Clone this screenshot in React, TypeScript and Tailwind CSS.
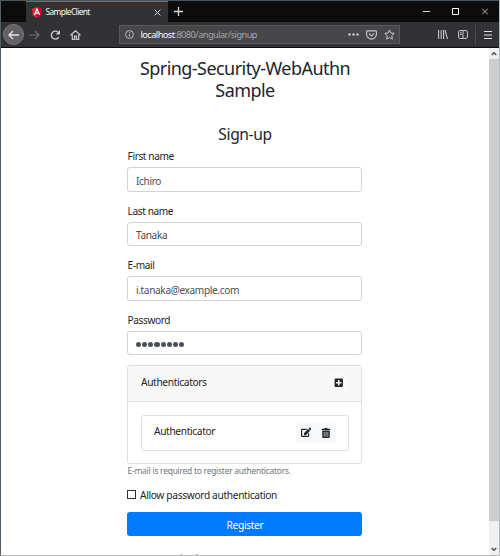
import React from "react";
import { FaEdit, FaTrashAlt, FaPlusSquare } from "react-icons/fa";

const stroke = { fill: "none", stroke: "currentColor" } as const;

function AngularLogo() {
  return (
    <svg width="10" height="11" viewBox="0 0 10 11">
      <path d="M5 0 10 1.8 9.2 8.4 5 11 .8 8.4 0 1.8Z" fill="#dd2c38" />
      <path d="M5 0 10 1.8 9.2 8.4 5 11Z" fill="#c3002f" />
      <path d="M2.3 7.9 5 1.9 7.7 7.9M3.5 6.1H6.5" fill="none" stroke="#fff" strokeWidth="1.1" />
    </svg>
  );
}

function TitleBar() {
  return (
    <div className="flex h-[21px] shrink-0 bg-[#0c0c0c] text-[#d7d7db]">
      <div className="ml-[25px] flex w-[142px] items-center border-t border-[#0a84ff] bg-[#323234] pl-1.5">
        <AngularLogo />
        <span className="ml-[3.5px] w-[108.5px] pt-px text-[8.3px] tracking-[-0.58px] text-[#f9f9fa]">SampleClient</span>
        <svg width="7" height="7" viewBox="0 0 7 7" {...stroke}><path d="m.6.6 5.8 5.8m0-5.8L.6 6.4" /></svg>
      </div>
      <svg className="ml-[6px] mt-[6px]" width="9" height="9" viewBox="0 0 9 9" {...stroke} strokeWidth="1.3"><path d="M4.5 0v9M0 4.5h9" /></svg>
      <div className="ml-auto flex items-center pr-[11px]">
        <svg width="7" height="7" viewBox="0 0 7 7" {...stroke}><path d="M0 3.5h7" /></svg>
        <svg className="ml-[22px]" width="7" height="7" viewBox="0 0 7 7" {...stroke} stroke="#fff"><path d="M.5.5h6v6h-6z" /></svg>
        <svg className="ml-[23px]" width="6" height="7" viewBox="0 0 6 7" {...stroke} strokeWidth=".8"><path d="m0 .5 6 6m0-6-6 6" /></svg>
      </div>
    </div>
  );
}

function Toolbar() {
  return (
    <div className="flex h-[26px] shrink-0 items-center border-b border-[#0e0c0e] bg-[#323234] text-[#c8c8cb]">
      <div className="ml-[2px] flex size-[21px] shrink-0 items-center justify-center rounded-full border border-[#7c7c7e] bg-[#626264] text-[#e4e4e6]">
        <svg width="11" height="10" viewBox="0 0 11 10" {...stroke} strokeWidth="1.3"><path d="M11 5H1M5 1 1 5l4 4" /></svg>
      </div>
      <svg className="ml-[5px] shrink-0 text-[#6e6e70]" width="11" height="10" viewBox="0 0 11 10" {...stroke} strokeWidth="1.2"><path d="M0 5h10M6 1l4 4-4 4" /></svg>
      <svg className="ml-[10px] shrink-0" width="11" height="10" viewBox="0 0 11 10" {...stroke} strokeWidth="1.4"><path d="M8.8 7.2A4 4 0 1 1 8.5 2.6" /><path d="M10 0v4.4H5.6Z" fill="currentColor" stroke="none" /></svg>
      <svg className="ml-[9px] shrink-0" width="11" height="10" viewBox="0 0 11 10" {...stroke} strokeWidth="1.2"><path d="m.5 5.3 5-4.6 5 4.6M2.3 4.5v4.9h2.3V6h1.8v3.4h2.3V4.5" /></svg>
      <div className="ml-[38px] flex h-[19px] w-[281px] shrink-0 items-center border border-[#59595b] bg-[#474749]">
        <svg className="ml-[5px]" width="9" height="9" viewBox="0 0 9 9" {...stroke} strokeWidth=".9"><circle cx="4.5" cy="4.5" r="3.9" /><path d="M4.5 4v2.7M4.5 2.2v1" /></svg>
        <span className="ml-[6.5px] pt-px text-[9.2px] tracking-[-0.54px] text-[#a5a5a8]"><span className="text-[#f9f9fa]">localhost</span>:8080/angular/signup</span>
        <div className="ml-auto flex items-center pr-[4px]">
          <svg width="11" height="3" viewBox="0 0 11 3" fill="currentColor"><circle cx="1.5" cy="1.5" r="1.3" /><circle cx="5.5" cy="1.5" r="1.3" /><circle cx="9.5" cy="1.5" r="1.3" /></svg>
          <svg className="ml-[7px]" width="11" height="10" viewBox="0 0 11 10" {...stroke} strokeWidth="1.1"><path d="M1.2.9h8.6q.6 0 .6.6v2.7a4.9 4.9 0 0 1-9.8 0V1.5q0-.6.6-.6ZM3 3.6l2.5 2.3L8 3.6" /></svg>
          <svg className="ml-[7px]" width="11" height="11" viewBox="0 0 11 11" {...stroke} strokeWidth="1"><path d="m5.5.9 1.4 3.1 3.3.4-2.4 2.3.6 3.4-2.9-1.7-2.9 1.7.6-3.4L.8 4.4l3.3-.4Z" /></svg>
        </div>
      </div>
      <svg className="ml-[38px] shrink-0" width="10" height="9" viewBox="0 0 10 9" {...stroke} strokeWidth="1.1"><path d="M.6 0v9M3.2 0v9M5.6 0v9M7 .2 9.5 9" /></svg>
      <svg className="ml-[10px] shrink-0" width="10" height="9" viewBox="0 0 10 9" {...stroke}><rect x=".6" y=".6" width="8.8" height="7.8" rx="1.2" /><path d="M5 .5v8M2 2.8h1.7M2 4.5h1.7" /></svg>
      <div className="ml-[7px] h-[20px] w-px bg-[#4c4c4e]" />
      <svg className="ml-[8px] shrink-0" width="8" height="8" viewBox="0 0 8 8" {...stroke} stroke="#e0e0e2" strokeWidth="1"><path d="M0 .5h8M0 4h8M0 7.5h8" /></svg>
    </div>
  );
}

function Field({ label, value }: { label: string; value: string }) {
  return (
    <div className="mb-[11.5px] h-[43px]">
      <div className="h-[18.5px] pl-[0.6px] pt-[0.5px] text-[10.1px] leading-[14px] tracking-[-0.4px]">{label}</div>
      <div className="flex h-[24.5px] items-center rounded-[3px] border border-[#ced4da] px-[8px] pt-[3px] text-[10.1px] leading-[14px] tracking-[-0.36px] text-[#495057]">
        {value ? <span>{value}</span> : (
          <span className="flex gap-[1px]">
            {Array.from({ length: 8 }, (_, i) => <i key={i} className="size-[5.15px] rounded-full bg-[#495057]" />)}
          </span>
        )}
      </div>
    </div>
  );
}

function Form() {
  return (
    <main className="ml-[126px] flex w-[235px] flex-col pt-[10px] text-[#212529]">
      <h1 className="pl-px text-center text-[18px] leading-[21.5px] tracking-[-0.55px]">
        <span className="block">Spring-Security-WebAuthn</span>
        <span className="block">Sample</span>
      </h1>
      <h2 className="mb-[4px] mt-[24px] pl-px text-center text-[15.6px] leading-[19.5px] tracking-[-0.4px]">Sign-up</h2>
      <Field label="First name" value="Ichiro" />
      <Field label="Last name" value="Tanaka" />
      <Field label="E-mail" value="i.tanaka@example.com" />
      <Field label="Password" value="" />
      <section className="-mt-[2px] h-[99px] rounded-[3px] border border-[#dfdfdf]">
        <header className="flex h-[36px] items-center justify-between border-b border-[#dfdfdf] bg-[#f7f7f7] pl-[13px] pr-[13px]">
          <span className="text-[10.2px] tracking-[-0.36px]">Authenticators</span>
          <button className="flex h-[20px] w-[19px] items-center justify-center rounded-[2px] bg-[#f8f9fa]"><FaPlusSquare size={9.5} /></button>
        </header>
        <div className="mx-[13px] mt-[13px] mr-[12px] flex h-[36px] items-center justify-between rounded-[3px] border border-[#dfdfdf] pl-[12px] pr-[12px]">
          <span className="pb-[1px] text-[10.2px] tracking-[-0.36px]">Authenticator</span>
          <div className="flex rounded-[2px] bg-[#f8f9fa]">
            <button className="flex h-[20px] w-[20px] items-center justify-center"><FaEdit size={10.5} /></button>
            <button className="flex h-[20px] w-[20px] items-center justify-center"><FaTrashAlt size={10} /></button>
          </div>
        </div>
      </section>
      <small className="h-[24px] pl-[0.6px] text-[8.4px] leading-[13px] tracking-[-0.22px] text-[#6c757d]">E-mail is required to register authenticators.</small>
      <label className="flex h-[14px] items-center">
        <span className="size-[9px] border border-[#333] bg-white" />
        <span className="ml-[4px] text-[10.2px] leading-[14px] tracking-[-0.34px]">Allow password authentication</span>
      </label>
      <button className="mt-[10px] h-[24px] shrink-0 rounded-[3px] bg-[#007bff] pl-px pt-[3px] text-[10.2px] leading-[14px] tracking-[-0.33px] text-white">Register</button>
      <div className="ml-[54px] mt-[18px] flex h-px shrink-0 gap-[14px]">
        <i className="w-px bg-[#5a9fe0]" />
        <i className="w-[2px] bg-[#8fbce8]" />
      </div>
    </main>
  );
}

function Scrollbar() {
  return (
    <aside className="ml-auto flex w-[10px] flex-col items-center bg-[#f0f0f0] text-[#505050]">
      <svg className="my-[3px] h-[5px] shrink-0" width="6" height="5" viewBox="0 0 6 5" {...stroke} strokeWidth="1.5"><path d="m.7 4 2.3-2.3L5.3 4" /></svg>
      <div className="h-[462px] w-full bg-[#cdcdcd]" />
      <svg className="mb-[3px] mt-auto" width="6" height="5" viewBox="0 0 6 5" {...stroke} strokeWidth="1.5"><path d="m.7 1 2.3 2.3L5.3 1" /></svg>
    </aside>
  );
}

export default function App() {
  return (
    <div className="flex h-[556px] w-[500px] flex-col overflow-hidden border border-b-[#b8b8b8] border-l-[#535e66] border-r-[#b5b9bc] border-t-[#4a565e] bg-white font-['Noto_Sans',sans-serif]">
      <TitleBar />
      <Toolbar />
      <div className="flex min-h-0 flex-1">
        <Form />
        <Scrollbar />
      </div>
    </div>
  );
}
